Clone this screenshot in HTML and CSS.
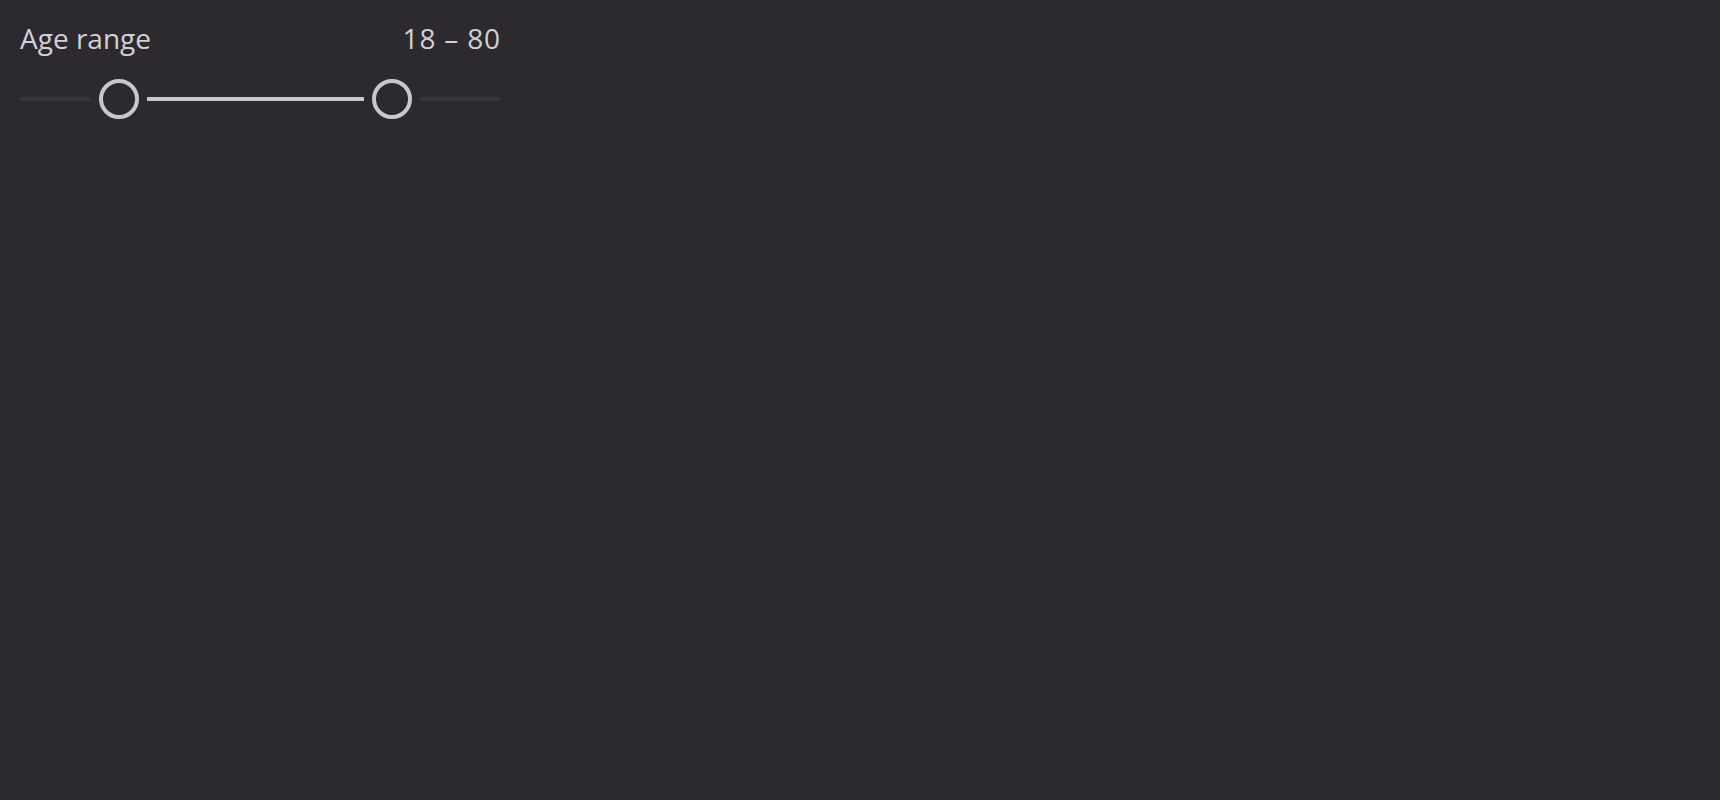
FILE: index.html
```html
<!DOCTYPE html>
<html lang="en">
<head>
    <meta charset="UTF-8">
    <meta name="viewport" content="width=device-width, initial-scale=1.0">
    <title>Age range</title>
    <link rel="stylesheet" href="styles.css">
</head>
<body>
    <div class="range-field">
        <div class="range-header">
            <span class="range-label">Age range</span>
            <span class="range-value">18 – 80</span>
        </div>
        <!-- values are 0..100, the thumbs travel across the inner 440px -->
        <div class="range-slider" style="--lo: 18; --hi: 80;">
            <div class="track track-left"></div>
            <div class="thumb"></div>
            <div class="track track-active"></div>
            <div class="thumb"></div>
            <div class="track track-right"></div>
        </div>
    </div>
</body>
</html>
```

FILE: styles.css
```css
body {
    margin: 0;
    background-color: #2c2a2e;
    font-family: "Open Sans", "Noto Sans", sans-serif;
    color: #d3d1d5;
}
.range-field {
    width: 480px;
    padding: 20px;
}
.range-header {
    display: flex;
    justify-content: space-between;
    align-items: baseline;
    font-size: 28px;
    line-height: 36px;
}
.range-value {
    letter-spacing: 0.8px;
    margin-right: -0.8px;
}
.range-slider {
    display: flex;
    align-items: center;
    gap: 8px;
    height: 40px;
    margin-top: 23px;
}
.track {
    height: 4px;
    border-radius: 2px;
    background-color: #38363a;
}
.track-left {
    width: calc(var(--lo) * 4.4px - 8px);
}
.track-active {
    width: calc((var(--hi) - var(--lo)) * 4.4px - 56px);
    background-color: #c8c7c9;
    border-radius: 0;
}
.track-right {
    flex: 1;
}
.thumb {
    width: 40px;
    height: 40px;
    box-sizing: border-box;
    border: 4px solid #c8c7c9;
    border-radius: 50%;
    flex-shrink: 0;
}
```
